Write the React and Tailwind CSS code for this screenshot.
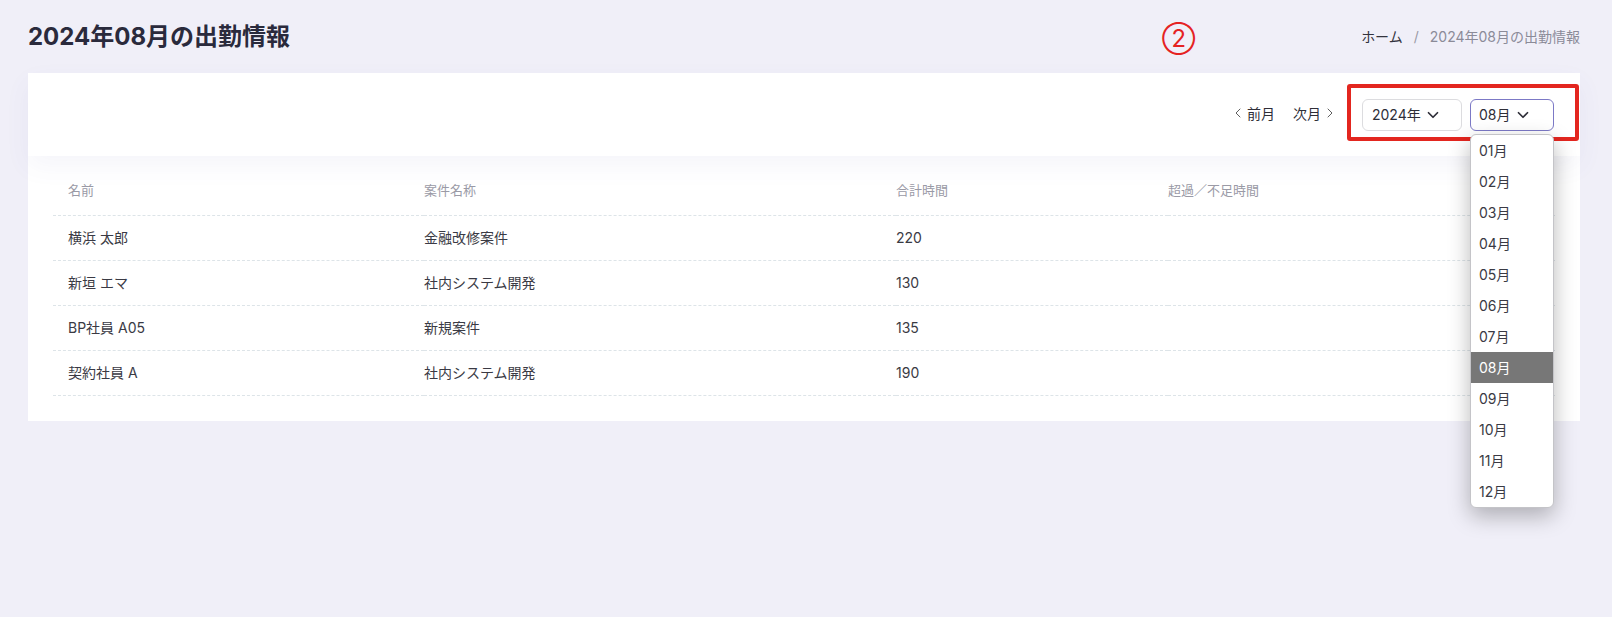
import { ChevronDown, ChevronLeft, ChevronRight } from 'lucide-react';

const rows = [
  { name: '横浜 太郎', project: '金融改修案件', total: '220', diff: '' },
  { name: '新垣 エマ', project: '社内システム開発', total: '130', diff: '' },
  { name: 'BP社員 A05', project: '新規案件', total: '135', diff: '' },
  { name: '契約社員 A', project: '社内システム開発', total: '190', diff: '' },
];

const months = ['01', '02', '03', '04', '05', '06', '07', '08', '09', '10', '11', '12'];

function MonthMenu({ current }) {
  return (
    <ul className="absolute left-0 top-[35px] z-20 w-[84px] overflow-hidden rounded-md border border-[#c4c4c8] bg-white shadow-[0_8px_22px_rgba(0,0,0,0.28)]">
      {months.map((m) => (
        <li
          key={m}
          className={
            m === current
              ? 'flex h-[31px] items-center bg-[#777777] pl-[8px] text-[14px] text-white'
              : 'flex h-[31px] items-center pl-[8px] text-[14px] text-[#3a3a44]'
          }
        >
          {m}月
        </li>
      ))}
    </ul>
  );
}

export default function App() {
  return (
    <div
      className="min-h-[617px] bg-[#f0eff8] pl-[28px] pr-[32px]"
      style={{ fontFamily: 'Inter, "Noto Sans CJK JP", sans-serif' }}
    >
      <div className="relative flex h-[73px] items-start justify-between">
        <h1 className="pt-[21px] text-[24px] font-bold leading-[32px] text-[#2a2a3c]">2024年08月の出勤情報</h1>
        <span className="absolute left-[1134px] top-[25px] text-[24px] leading-[28px] text-[#e52222]">②</span>
        <nav className="flex items-center gap-[11px] pt-[27px] text-[14px] leading-[20px]">
          <span className="text-[#33333d]">ホーム</span>
          <span className="text-[#9a9aa6]">/</span>
          <span className="text-[#8b8b98]">2024年08月の出勤情報</span>
        </nav>
      </div>

      <div className="bg-white">
        <div className="relative z-10 flex h-[83px] items-center justify-end pr-[26px] shadow-[0_10px_24px_rgba(90,90,170,0.06)]">
          <div className="flex items-center gap-[18px] pb-[3px] text-[14px] text-[#2e2e38]">
            <button className="flex items-center gap-[1px]">
              <ChevronLeft size={16} strokeWidth={1.3} className="text-[#444]" />
              前月
            </button>
            <button className="flex items-center gap-[1px]">
              次月
              <ChevronRight size={16} strokeWidth={1.3} className="text-[#444]" />
            </button>
          </div>
          <div className="relative ml-[24px] flex items-center gap-[8px]">
            <div className="absolute left-[-15px] top-[-15px] h-[57px] w-[232px] rounded-[3px] border-[4px] border-[#e3261f]" />
            <button className="flex h-[32px] w-[100px] items-center gap-[3px] rounded-md border border-[#dcdcdf] bg-white pl-[9px] text-[14px] text-[#2e2e38]">
              2024年
              <ChevronDown size={18} strokeWidth={2.3} />
            </button>
            <div className="relative">
              <button className="flex h-[32px] w-[84px] items-center gap-[3px] rounded-md border border-[#7c79c6] bg-white pl-[8px] text-[14px] text-[#2e2e38]">
                08月
                <ChevronDown size={18} strokeWidth={2.3} />
              </button>
              <MonthMenu current="08" />
            </div>
          </div>
        </div>

        <div className="px-[25px] pb-[25px] pt-[14px]">
          <table className="w-full table-fixed border-collapse">
            <colgroup>
              <col className="w-[371px]" />
              <col className="w-[472px]" />
              <col className="w-[272px]" />
              <col />
            </colgroup>
            <thead>
              <tr className="h-[45px] border-b border-dashed border-[#dde4e8] text-left text-[13px] font-normal text-[#9a9aa6]">
                <th className="pb-[3px] pl-[15px] font-normal">名前</th>
                <th className="pb-[3px] font-normal">案件名称</th>
                <th className="pb-[3px] font-normal">合計時間</th>
                <th className="pb-[3px] font-normal">超過／不足時間</th>
              </tr>
            </thead>
            <tbody>
              {rows.map((r) => (
                <tr key={r.name} className="h-[45px] border-b border-dashed border-[#dde4e8] text-[14px] text-[#3a3a44]">
                  <td className="pl-[15px]">{r.name}</td>
                  <td>{r.project}</td>
                  <td>{r.total}</td>
                  <td>{r.diff}</td>
                </tr>
              ))}
            </tbody>
          </table>
        </div>
      </div>
    </div>
  );
}
